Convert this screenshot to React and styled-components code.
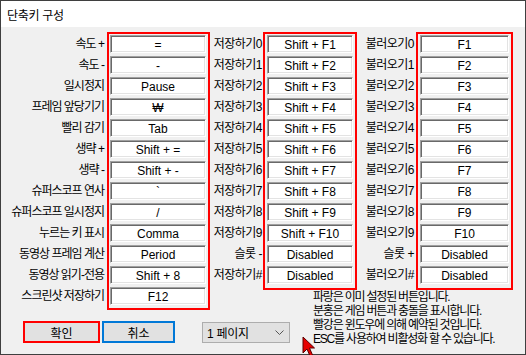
import React from 'react';
import styled, { createGlobalStyle } from 'styled-components';

const GlobalStyle = createGlobalStyle`
  html, body {
    margin: 0;
    padding: 0;
    overflow: hidden;
    background: #f0f0f0;
  }
  body {
    font-family: "Liberation Sans", "Noto Sans CJK KR", sans-serif;
    font-size: 12px;
    color: #000;
  }
`;

const FONT = `"Liberation Sans", "Noto Sans CJK KR", sans-serif`;

const speedRows = [
  ['속도 +', '='],
  ['속도 -', '-'],
  ['일시정지', 'Pause'],
  ['프레임 앞당기기', '₩'],
  ['빨리 감기', 'Tab'],
  ['생략 +', 'Shift + ='],
  ['생략 -', 'Shift + -'],
  ['슈퍼스코프 연사', '`'],
  ['슈퍼스코프 일시정지', '/'],
  ['누르는 키 표시', 'Comma'],
  ['동영상 프레임 계산', 'Period'],
  ['동영상 읽기-전용', 'Shift + 8'],
  ['스크린샷 저장하기', 'F12'],
];

const slots = [0, 1, 2, 3, 4, 5, 6, 7, 8, 9];

const saveRows = [
  ...slots.map((n) => ['저장하기' + n, 'Shift + F' + (n + 1)]),
  ['슬롯 -', 'Disabled'],
  ['저장하기#', 'Disabled'],
];

const loadRows = [
  ...slots.map((n) => ['불러오기' + n, 'F' + (n + 1)]),
  ['슬롯 +', 'Disabled'],
  ['불러오기#', 'Disabled'],
];

const notes = [
  '파랑은 이미 설정된 버튼입니다.',
  '분홍은 게임 버튼과 충돌을 표시합니다.',
  '빨강은 윈도우에 의해 예약된 것입니다.',
  'ESC를 사용하여 비활성화 할 수 있습니다.',
];

const Window = styled.div`
  position: relative;
  width: 526px;
  height: 355px;
  box-sizing: border-box;
  border: 1px solid #3f3f3f;
  background: #f0f0f0;
  display: flex;
  flex-direction: column;
  font-family: ${FONT};
`;

const TitleBar = styled.div`
  height: 26px;
  flex-shrink: 0;
  background: #fff;
  display: flex;
  align-items: center;
  padding-left: 6px;
  font-size: 12px;
  letter-spacing: -0.3px;
`;

const Body = styled.div`
  flex: 1;
  padding-top: 5px;
  display: grid;
  grid-template-columns: 209px 100px 1fr;
  grid-template-rows: 258px 20px 1fr;
  grid-template-areas:
    'speed keys keys'
    'speed . notes'
    'buttons buttons notes';
`;

const Group = styled.div`
  grid-area: ${(p) => p.$area};
  display: flex;
  align-items: flex-start;
  gap: ${(p) => p.$gap || 0}px;
`;

const LabelColumn = styled.div`
  width: ${(p) => p.$width}px;
  flex-shrink: 0;
  padding-top: 3px;
  padding-right: ${(p) => p.$pad || 0}px;
  box-sizing: border-box;
  display: flex;
  flex-direction: column;
  align-items: flex-end;
  gap: 3px;
  letter-spacing: ${(p) => p.$spacing}px;
`;

const Label = styled.div`
  height: 18px;
  line-height: 18px;
  white-space: nowrap;
  font-size: 12px;
`;

const RedBox = styled.div`
  width: ${(p) => p.$width}px;
  flex-shrink: 0;
  box-sizing: border-box;
  border: 2px solid #ff0000;
  padding: 1px 2px ${(p) => p.$bottom}px ${(p) => p.$left}px;
  display: flex;
  flex-direction: column;
  gap: 3px;
`;

const KeyField = styled.div`
  height: 18px;
  box-sizing: border-box;
  background: #fff;
  border: 1px solid;
  border-color: #a0a0a0 #fff #fff #a0a0a0;
  box-shadow: inset 1px 1px 0 #696969, inset -1px -1px 0 #e3e3e3;
  display: flex;
  align-items: center;
  justify-content: center;
  font-size: 12px;
  padding-top: 1px;
  white-space: nowrap;
`;

const Notes = styled.div`
  grid-area: notes;
  padding-left: 3px;
  font-size: 12px;
  line-height: 14px;
  letter-spacing: -1.2px;
  white-space: nowrap;
`;

const ButtonRow = styled.div`
  grid-area: buttons;
  display: flex;
  align-items: flex-start;
  padding: 11px 0 0 22px;
`;

const DialogButton = styled.button`
  width: ${(p) => p.$width}px;
  height: 22px;
  box-sizing: border-box;
  margin: 0 ${(p) => p.$after || 0}px 0 0;
  padding: 0;
  border: 2px solid ${(p) => p.$ring};
  background: #e1e1e1;
  font-family: ${FONT};
  font-size: 12px;
  color: #000;
`;

const PageSelect = styled.div`
  width: 88px;
  height: 21px;
  margin-top: 1px;
  box-sizing: border-box;
  border: 1px solid #adadad;
  background: #e1e1e1;
  display: flex;
  align-items: center;
  justify-content: space-between;
  padding: 0 5px 0 4px;
  font-size: 12px;
  letter-spacing: -0.3px;
`;

const Cursor = styled.svg`
  position: absolute;
  left: 301px;
  top: 335px;
`;

const KeyGroup = ({ rows, labelWidth, labelPad, spacing, boxWidth, boxLeft, boxBottom }) => (
  <>
    <LabelColumn $width={labelWidth} $pad={labelPad} $spacing={spacing}>
      {rows.map(([label]) => (
        <Label key={label}>{label}</Label>
      ))}
    </LabelColumn>
    <RedBox $width={boxWidth} $left={boxLeft} $bottom={boxBottom}>
      {rows.map(([label, key]) => (
        <KeyField key={label}>{key}</KeyField>
      ))}
    </RedBox>
  </>
);

export default function App() {
  return (
    <>
      <GlobalStyle />
      <Window>
        <TitleBar>단축키 구성</TitleBar>
        <Body>
          <Group $area="speed" $gap={3}>
            <KeyGroup rows={speedRows} labelWidth={103} labelPad={0} spacing={-1} boxWidth={103} boxLeft={1} boxBottom={3} />
          </Group>
          <Group $area="keys">
            <KeyGroup rows={saveRows} labelWidth={53} labelPad={1} spacing={-0.5} boxWidth={94} boxLeft={2} boxBottom={4} />
            <KeyGroup rows={loadRows} labelWidth={59} labelPad={2} spacing={-0.5} boxWidth={97} boxLeft={2} boxBottom={4} />
          </Group>
          <Notes>
            {notes.map((n) => (
              <div key={n}>{n}</div>
            ))}
          </Notes>
          <ButtonRow>
            <DialogButton $width={77} $after={2} $ring="#ff0000">확인</DialogButton>
            <DialogButton $width={73} $after={27} $ring="#0078d7">취소</DialogButton>
            <PageSelect>
              <span>1 페이지</span>
              <svg width="9" height="6" viewBox="0 0 9 6">
                <polyline points="0.5,0.5 4.5,4.5 8.5,0.5" fill="none" stroke="#555" strokeWidth="1" />
              </svg>
            </PageSelect>
          </ButtonRow>
        </Body>
        <Cursor width="14" height="22" viewBox="0 0 14 22">
          <path d="M1 1 L1 17 L5 13 L8 20 L10.5 19 L7.5 12 L12.5 12 Z" fill="#e60000" stroke="#5a0000" strokeWidth="1" strokeLinejoin="round" />
        </Cursor>
      </Window>
    </>
  );
}
